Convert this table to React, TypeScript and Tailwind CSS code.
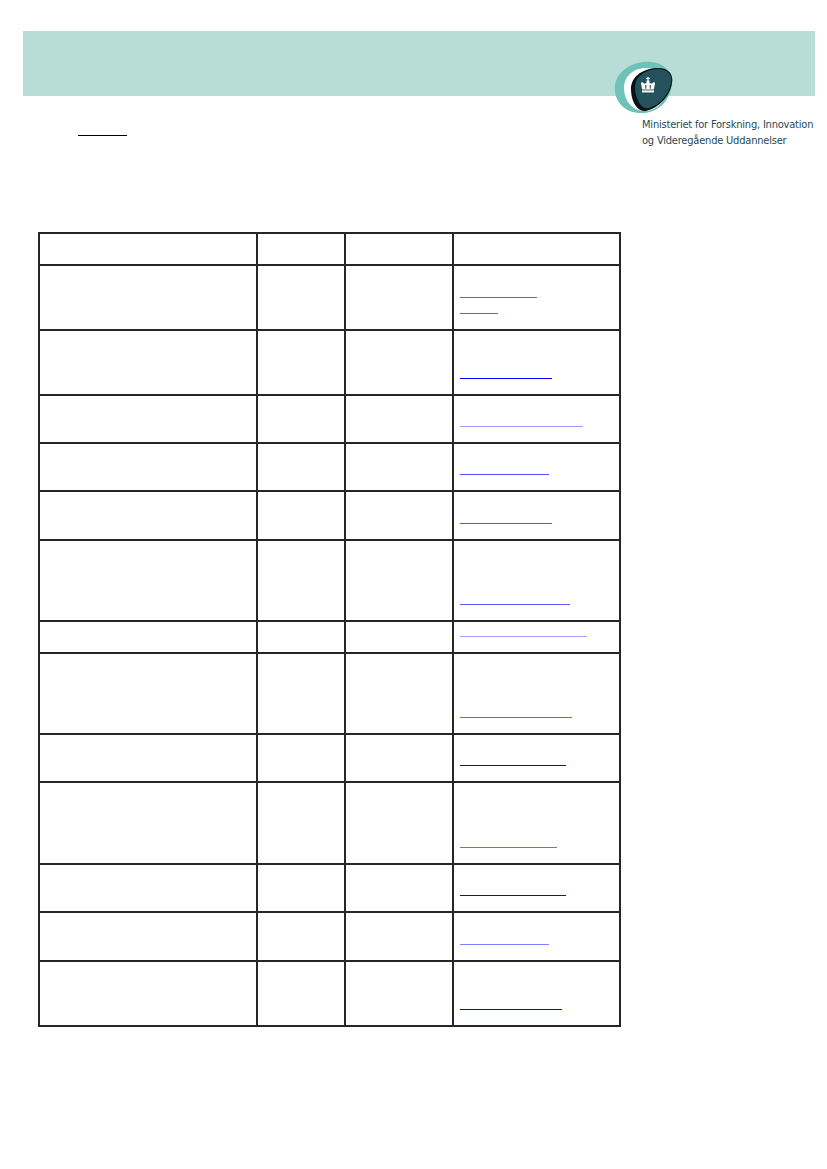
// Ministry document page: header band, logo, link table
import React from 'react';

type LinkRow = { height: string; links: { w: number; color: string }[] };

// underline widths (px) and tints for the fourth column
const ROWS: LinkRow[] = [
  { height: 'h-[65px]', links: [{ w: 77, color: 'bg-[#5c5cff]' }, { w: 38, color: 'bg-[#5c5cff]' }] },
  { height: 'h-[65px]', links: [{ w: 92, color: 'bg-[#0000ff]' }] },
  { height: 'h-[48px]', links: [{ w: 123, color: 'bg-[#9c9cff]' }] },
  { height: 'h-[48px]', links: [{ w: 89, color: 'bg-[#5050ff]' }] },
  { height: 'h-[49px]', links: [{ w: 92, color: 'bg-[#5656ff]' }] },
  { height: 'h-[81px]', links: [{ w: 110, color: 'bg-[#5a5aff]' }] },
  { height: 'h-[32px]', links: [{ w: 127, color: 'bg-[#a0a0ff]' }] },
  { height: 'h-[81px]', links: [{ w: 112, color: 'bg-[#6464ff]' }] },
  { height: 'h-[48px]', links: [{ w: 106, color: 'bg-[#0000ff]' }] },
  { height: 'h-[82px]', links: [{ w: 97, color: 'bg-[#6a6aff]' }] },
  { height: 'h-[48px]', links: [{ w: 106, color: 'bg-[#0000ff]' }] },
  { height: 'h-[49px]', links: [{ w: 89, color: 'bg-[#8080ff]' }] },
  { height: 'h-[65px]', links: [{ w: 102, color: 'bg-[#0000ff]' }] },
];

const cell = 'border-r-2 border-b-2 border-[#262626]';

const MinistryLogo: React.FC = () => (
  <svg width="60" height="54" viewBox="0 0 60 54">
    {/* outer teal blob */}
    <path
      d="M2 32 C0 17 12 4 30 2 C47 0 59 9 59 22 C59 38 47 52 31 53 C16 54 4 46 2 32 Z"
      fill="#6fc2b8"
    />
    {/* white inner */}
    <path
      d="M11 30 C10 17 20 8 33 8 C46 8 54 17 53 30 C52 43 42 51 32 51 C20 51 12 42 11 30 Z"
      fill="#ffffff"
    />
    {/* black edge */}
    <path
      d="M18 29 C18 17 29 9 43 8 C54 7 61 13 59 23 C57 36 46 48 33 51 C24 52 18 41 18 29 Z"
      fill="#0b1214"
    />
    {/* dark teal body */}
    <path
      d="M22 27 C22 17 31 10 44 9 C54 9 60 14 58 23 C56 34 47 45 36 48 C28 50 22 38 22 27 Z"
      fill="#24525c"
    />
    {/* crown */}
    <g fill="#ffffff">
      <rect x="34.4" y="17" width="1.2" height="3.4" />
      <rect x="33.2" y="17.9" width="3.6" height="1.1" />
      <circle cx="35" cy="21.6" r="1.5" />
      <path d="M28 23.4 C28 22.2 29.7 22 30.4 22.9 C31.2 24 32.6 23.8 33.3 22.8 L35 21.9 L36.7 22.8 C37.4 23.8 38.8 24 39.6 22.9 C40.3 22 42 22.2 42 23.4 L40.8 29.6 L29.2 29.6 Z" />
      <rect x="29" y="30.4" width="12" height="2" />
    </g>
    <g fill="#24525c">
      <rect x="32.2" y="25" width="1.1" height="3.6" />
      <rect x="36.7" y="25" width="1.1" height="3.6" />
    </g>
  </svg>
);

const App: React.FC = () => {
  return (
    <div className="relative w-[827px] min-h-[1169px] bg-white pt-[31px] font-['Liberation_Sans',Arial,sans-serif]">
      {/* Header band */}
      <div className="ml-[23px] h-[65px] w-[792px] bg-[#b8ddd6]" />

      {/* Logo overlapping the band */}
      <div className="absolute left-[613px] top-[60px]">
        <MinistryLogo />
      </div>

      {/* Under-band row: short rule + ministry name */}
      <div className="flex h-[136px] items-start">
        <div className="ml-[78px] mt-[39px] h-px w-[49px] shrink-0 bg-black" />
        <div className="ml-[515px] mt-[21px] shrink-0 whitespace-nowrap font-['DejaVu_Sans_Condensed','Roboto',sans-serif] text-[11px] leading-[16px] tracking-[-0.2px] text-[#1f4a55]">
          <div>Ministeriet for Forskning, Innovation</div>
          <div>og Videregående Uddannelser</div>
        </div>
      </div>

      {/* Table */}
      <div className="ml-[38px] w-[583px] border-l-2 border-t-2 border-[#262626]">
        <div className="grid grid-cols-[218px_88px_108px_167px]">
          <div className={`${cell} h-[32px]`} />
          <div className={`${cell} h-[32px]`} />
          <div className={`${cell} h-[32px]`} />
          <div className={`${cell} h-[32px]`} />
        </div>
        {ROWS.map((row, i) => (
          <div key={i} className="grid grid-cols-[218px_88px_108px_167px]">
            <div className={`${cell} ${row.height}`} />
            <div className={`${cell} ${row.height}`} />
            <div className={`${cell} ${row.height}`} />
            <div className={`${cell} ${row.height} flex flex-col justify-end pb-[15px] pl-[6px]`}>
              {row.links.map((l, j) => (
                <div key={j} className="flex h-[16px] items-end">
                  <div className={`h-px ${l.color}`} style={{ width: l.w }} />
                </div>
              ))}
            </div>
          </div>
        ))}
      </div>
    </div>
  );
};

export default App;
